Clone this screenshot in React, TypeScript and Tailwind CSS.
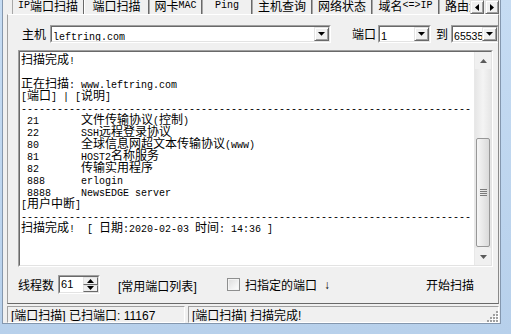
import React from "react";

const CJK = "font-['Noto_Sans_CJK_SC',sans-serif] text-[12px]";
const MONO = "font-['Liberation_Mono',monospace] text-[10px]";
const SANS = "font-['Liberation_Sans',sans-serif] text-[12px]";

// splits a string into ascii runs and cjk runs so each gets its own font
function Mix({ s, latin = MONO }: { s: string; latin?: string }) {
  const parts = s.split(/([\x00-\x7f]+)/).filter((p) => p !== "");
  return (
    <>
      {parts.map((p, i) =>
        /^[\x00-\x7f]+$/.test(p) ? (
          <span key={i} className={latin}>
            {p}
          </span>
        ) : (
          <span key={i} className={CJK}>
            {p}
          </span>
        )
      )}
    </>
  );
}

function DownTri() {
  return (
    <svg width="7" height="4" viewBox="0 0 7 4">
      <polygon points="0,0 7,0 3.5,3.8" fill="#000" />
    </svg>
  );
}

function DropBtn() {
  return (
    <div className="w-[15px] shrink-0 h-full flex items-center justify-center bg-[#f0f0f0] border border-t-[#e3e3e3] border-l-[#e3e3e3] border-r-[#696969] border-b-[#696969] shadow-[inset_1px_1px_0_#ffffff,inset_-1px_-1px_0_#a0a0a0]">
      <DownTri />
    </div>
  );
}

function Sunken({ className, children }: { className: string; children: React.ReactNode }) {
  return (
    <div className={`${className} flex border border-t-[#a0a0a0] border-l-[#a0a0a0] border-r-white border-b-white`}>
      <div className="flex-1 flex min-w-0 border border-t-[#696969] border-l-[#696969] border-r-[#e3e3e3] border-b-[#e3e3e3] bg-white">
        {children}
      </div>
    </div>
  );
}

function Combo({ w, children }: { w: string; children: React.ReactNode }) {
  return (
    <Sunken className={`${w} h-[18px] shrink-0`}>
      <div className="flex-1 min-w-0 pl-[1px] leading-[14px] whitespace-pre overflow-hidden">{children}</div>
      <DropBtn />
    </Sunken>
  );
}

const tabs = [
  { label: "IP端口扫描", w: "w-[72px]" },
  { label: "端口扫描", w: "w-[65px]", active: true },
  { label: "网卡MAC", w: "w-[53px]" },
  { label: "Ping", w: "w-[50px]" },
  { label: "主机查询", w: "w-[60px]" },
  { label: "网络状态", w: "w-[60px]" },
  { label: "域名<=>IP", w: "w-[67px]" },
  { label: "路由追踪", w: "w-[60px]" },
];

const DASH = "-".repeat(75);

const lines = [
  "扫描完成!",
  "",
  "正在扫描: www.leftring.com",
  "[端口] | [说明]",
  DASH,
  " 21       文件传输协议(控制)",
  " 22       SSH远程登录协议",
  " 80       全球信息网超文本传输协议(www)",
  " 81       HOST2名称服务",
  " 82       传输实用程序",
  " 888      erlogin",
  " 8888     NewsEDGE server",
  "[用户中断]",
  DASH,
  "扫描完成!  [ 日期:2020-02-03 时间: 14:36 ]",
];

function ArrowBtn({ dir }: { dir: "up" | "down" }) {
  return (
    <div className="h-[17px] flex items-center justify-center bg-[#f0f0f0]">
      <svg width="7" height="4" viewBox="0 0 7 4">
        {dir === "up" ? (
          <polygon points="0,4 7,4 3.5,0" fill="#5a5a5a" />
        ) : (
          <polygon points="0,0 7,0 3.5,4" fill="#5a5a5a" />
        )}
      </svg>
    </div>
  );
}

function ScrollBar() {
  return (
    <div className="w-[17px] shrink-0 flex flex-col bg-[#f0f0f0] border-l border-[#e8e8e8]">
      <ArrowBtn dir="up" />
      <div className="flex-1 flex flex-col justify-end px-[1px] bg-gradient-to-r from-[#e6e6e6] via-[#f4f4f4] to-[#e6e6e6]">
        <div className="h-[109px] mb-[1px] rounded-[2px] border border-[#979797] bg-gradient-to-r from-[#f6f6f6] to-[#dadada] flex items-center justify-center">
          <svg width="7" height="7" viewBox="0 0 7 7">
            <rect x="0" y="0" width="7" height="1" fill="#7a7a7a" />
            <rect x="0" y="2" width="7" height="1" fill="#7a7a7a" />
            <rect x="0" y="4" width="7" height="1" fill="#7a7a7a" />
            <rect x="0" y="6" width="7" height="1" fill="#7a7a7a" />
          </svg>
        </div>
      </div>
      <ArrowBtn dir="down" />
    </div>
  );
}

function TabArrows() {
  const btn =
    "w-[14px] h-[14px] flex items-center justify-center bg-[#f0f0f0] border border-t-[#e3e3e3] border-l-[#e3e3e3] border-r-[#696969] border-b-[#696969] shadow-[inset_1px_1px_0_#ffffff,inset_-1px_-1px_0_#a0a0a0]";
  return (
    <div className="flex shrink-0 gap-[1px] pr-[1px]">
      <div className={btn}>
        <svg width="4" height="7" viewBox="0 0 4 7">
          <polygon points="4,0 4,7 0,3.5" fill="#000" />
        </svg>
      </div>
      <div className={btn}>
        <svg width="4" height="7" viewBox="0 0 4 7">
          <polygon points="0,0 0,7 4,3.5" fill="#000" />
        </svg>
      </div>
    </div>
  );
}

function Grip() {
  const dots = [
    [9, 1],
    [6, 4], [9, 4],
    [3, 7], [6, 7], [9, 7],
    [0, 10], [3, 10], [6, 10], [9, 10],
  ];
  return (
    <svg width="12" height="12" viewBox="0 0 12 12">
      {dots.map(([x, y], i) => (
        <g key={i}>
          <rect x={x + 1} y={y + 1} width="2" height="2" fill="#ffffff" />
          <rect x={x} y={y} width="2" height="2" fill="#a0a0a0" />
        </g>
      ))}
    </svg>
  );
}

export default function App() {
  const label = `shrink-0 whitespace-nowrap ${CJK} leading-[18px]`;
  return (
    <div className="w-[511px] h-[334px] overflow-hidden flex pl-[2px] pr-[10px] pb-[10px] bg-gradient-to-b from-[#c6dcf3] to-[#b7d0eb] text-black">
      <div className="flex-1 min-w-0 overflow-hidden flex flex-col bg-[#f0f0f0] border-l border-r border-b border-[#8497ae]">
        {/* tab control */}
        <div className="ml-[4px] min-w-0 h-[304px] flex flex-col">
          <div className="h-[14px] flex min-w-0">
            <div className="flex-1 min-w-0 flex pl-[5px] overflow-hidden">
              {tabs.map((t) => (
                <div
                  key={t.label}
                  className={`${t.w} shrink-0 flex items-center justify-center whitespace-pre leading-[12px] pb-[3px] border-l border-r ${
                    t.active
                      ? "h-[15px] relative z-10 bg-[#f0f0f0] border-l-white border-r-[#696969]"
                      : "h-[14px] bg-[#f0f0f0] border-l-[#a8a8a8] border-r-[#696969]"
                  }`}
                >
                  <Mix s={t.label} />
                </div>
              ))}
            </div>
            <TabArrows />
          </div>
          <div className="flex-1 min-w-0 flex flex-col overflow-hidden border border-t-white border-l-[#a0a0a0] border-r-[#8a8a8a] border-b-[#696969] mr-[1px]">
            {/* host row */}
            <div className="mt-[10px] h-[18px] flex items-center">
              <span className={`ml-[14px] ${label}`}>主机</span>
              <div className="ml-[4px] shrink-0">
                <Combo w="w-[281px]">
                  <Mix s="leftring.com" />
                </Combo>
              </div>
              <span className={`ml-[21px] ${label}`}>端口</span>
              <div className="ml-[2px] shrink-0">
                <Combo w="w-[53px]">
                  <span className="font-['Liberation_Sans',sans-serif] text-[11px]">1</span>
                </Combo>
              </div>
              <span className={`ml-[5px] ${label}`}>到</span>
              <div className="ml-[3px] shrink-0">
                <Combo w="w-[48px]">
                  <span className="font-['Liberation_Sans',sans-serif] text-[10.5px]">65535</span>
                </Combo>
              </div>
            </div>

            {/* output */}
            <Sunken className="mt-[7px] ml-[10px] w-[475px] h-[217px] shrink-0">
              <div className="flex-1 min-w-0 overflow-hidden pl-[1px]">
                {lines.map((l, i) => (
                  <div key={i} className="h-[12px] leading-[12px] whitespace-pre">
                    <Mix s={l} />
                  </div>
                ))}
              </div>
              <ScrollBar />
            </Sunken>

            {/* bottom controls */}
            <div className="mt-[8px] h-[19px] flex items-center">
              <span className={`ml-[10px] shrink-0 ${CJK}`}>线程数</span>
              <Sunken className="ml-[4px] w-[42px] h-[19px] shrink-0">
                <div className="flex-1 pl-[1px] leading-[15px] font-['Liberation_Sans',sans-serif] text-[11px]">61</div>
                <div className="w-[15px] flex flex-col">
                  {["up", "down"].map((d) => (
                    <div
                      key={d}
                      className="flex-1 flex items-center justify-center bg-[#f0f0f0] border border-t-[#e3e3e3] border-l-[#e3e3e3] border-r-[#696969] border-b-[#696969]"
                    >
                      <svg width="7" height="4" viewBox="0 0 7 4">
                        {d === "up" ? (
                          <polygon points="0,4 7,4 3.5,0" fill="#000" />
                        ) : (
                          <polygon points="0,0 7,0 3.5,4" fill="#000" />
                        )}
                      </svg>
                    </div>
                  ))}
                </div>
              </Sunken>
              <span className="ml-[18px] w-[109px] shrink-0 whitespace-pre">
                <Mix s="[常用端口列表]" latin={SANS} />
              </span>
              <div className="w-[13px] h-[13px] shrink-0 border border-[#8e8f8f] bg-gradient-to-br from-[#dcdcdc] to-[#ffffff] shadow-[inset_0_0_0_1px_#f4f4f4]" />
              <span className={`ml-[5px] shrink-0 ${CJK}`}>扫指定的端口</span>
              <span className="ml-[7px] font-['Liberation_Sans',sans-serif] text-[12px]">↓</span>
              <span className={`ml-auto mr-[24px] shrink-0 ${CJK}`}>开始扫描</span>
            </div>
          </div>
        </div>

        {/* status bar */}
        <div className="mt-[2px] h-[17px] flex ml-[4px] items-end">
          <div className="w-[178px] h-[17px] pl-[3px] leading-[15px] whitespace-pre overflow-hidden border border-t-[#a0a0a0] border-l-[#a0a0a0] border-r-white border-b-white">
            <Mix s="[端口扫描] 已扫端口: 11167" latin={SANS} />
          </div>
          <div className="ml-[3px] flex-1 h-[17px] pl-[3px] leading-[15px] whitespace-pre overflow-hidden border border-t-[#a0a0a0] border-l-[#a0a0a0] border-r-white border-b-white">
            <Mix s="[端口扫描] 扫描完成!" latin={SANS} />
          </div>
          <div className="w-[12px] h-[12px] mr-[1px] mb-[1px] -ml-[12px] relative">
            <Grip />
          </div>
        </div>
      </div>
    </div>
  );
}
